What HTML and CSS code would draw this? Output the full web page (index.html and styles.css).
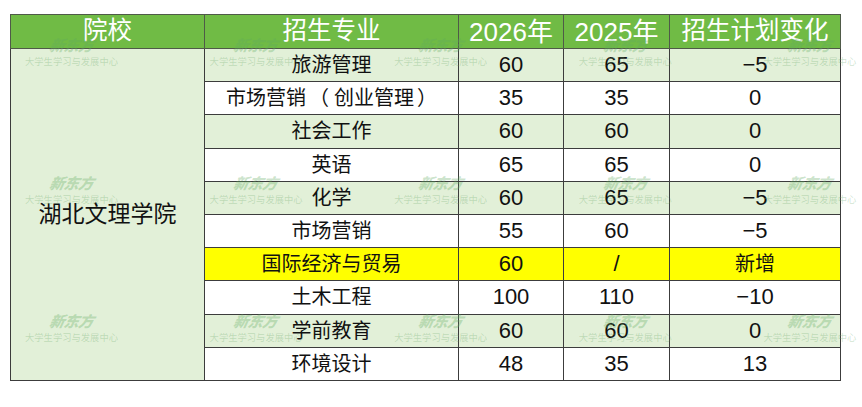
FILE: index.html
```html
<!DOCTYPE html>
<html lang="zh-CN">
<head>
<meta charset="utf-8">
<title>湖北文理学院 招生计划</title>
<link rel="stylesheet" href="styles.css">
</head>
<body>
<div class="page">
  <table class="plan">
    <colgroup>
      <col class="c1"><col class="c2"><col class="c3"><col class="c4"><col class="c5">
    </colgroup>
    <thead>
      <tr>
        <th>院校</th>
        <th>招生专业</th>
        <th class="yr">2026年</th>
        <th class="yr">2025年</th>
        <th>招生计划变化</th>
      </tr>
    </thead>
    <tbody>
      <tr class="g">
        <td class="school" rowspan="10">湖北文理学院</td>
        <td>旅游管理</td><td class="n">60</td><td class="n">65</td><td class="n">−5</td>
      </tr>
      <tr class="w"><td>市场营销<span class="lp">（</span>创业管理<span class="rp">）</span></td><td class="n">35</td><td class="n">35</td><td class="n">0</td></tr>
      <tr class="g"><td>社会工作</td><td class="n">60</td><td class="n">60</td><td class="n">0</td></tr>
      <tr class="w"><td>英语</td><td class="n">65</td><td class="n">65</td><td class="n">0</td></tr>
      <tr class="g"><td>化学</td><td class="n">60</td><td class="n">65</td><td class="n">−5</td></tr>
      <tr class="w"><td>市场营销</td><td class="n">55</td><td class="n">60</td><td class="n">−5</td></tr>
      <tr class="y"><td>国际经济与贸易</td><td class="n">60</td><td class="n">/</td><td>新增</td></tr>
      <tr class="w"><td>土木工程</td><td class="n">100</td><td class="n">110</td><td class="n">−10</td></tr>
      <tr class="g"><td>学前教育</td><td class="n">60</td><td class="n">60</td><td class="n">0</td></tr>
      <tr class="w"><td>环境设计</td><td class="n">48</td><td class="n">35</td><td class="n">13</td></tr>
    </tbody>
  </table>

  <div class="wm-layer" aria-hidden="true">
    <div class="wm"><span class="wm-logo">新东方</span><span class="wm-text">大学生学习与发展中心</span></div>
    <div class="wm"><span class="wm-logo">新东方</span><span class="wm-text">大学生学习与发展中心</span></div>
    <div class="wm"><span class="wm-logo">新东方</span><span class="wm-text">大学生学习与发展中心</span></div>
    <div class="wm"><span class="wm-logo">新东方</span><span class="wm-text">大学生学习与发展中心</span></div>
    <div class="wm"><span class="wm-logo">新东方</span><span class="wm-text">大学生学习与发展中心</span></div>
    <div class="wm"><span class="wm-logo">新东方</span><span class="wm-text">大学生学习与发展中心</span></div>
    <div class="wm"><span class="wm-logo">新东方</span><span class="wm-text">大学生学习与发展中心</span></div>
    <div class="wm"><span class="wm-logo">新东方</span><span class="wm-text">大学生学习与发展中心</span></div>
    <div class="wm"><span class="wm-logo">新东方</span><span class="wm-text">大学生学习与发展中心</span></div>
    <div class="wm"><span class="wm-logo">新东方</span><span class="wm-text">大学生学习与发展中心</span></div>
    <div class="wm"><span class="wm-logo">新东方</span><span class="wm-text">大学生学习与发展中心</span></div>
    <div class="wm"><span class="wm-logo">新东方</span><span class="wm-text">大学生学习与发展中心</span></div>
    <div class="wm"><span class="wm-logo">新东方</span><span class="wm-text">大学生学习与发展中心</span></div>
    <div class="wm"><span class="wm-logo">新东方</span><span class="wm-text">大学生学习与发展中心</span></div>
    <div class="wm"><span class="wm-logo">新东方</span><span class="wm-text">大学生学习与发展中心</span></div>
  </div>
</div>
</body>
</html>
```

FILE: styles.css
```css
html, body {
  margin: 0;
  padding: 0;
  background: #ffffff;
}

.page {
  position: relative;
  width: 862px;
  height: 407px;
  padding: 14px 0 0 10px;
  box-sizing: border-box;
  overflow: hidden;
  font-family: "Liberation Sans", "Noto Sans CJK SC", sans-serif;
  color: #111111;
}

.plan {
  border-collapse: collapse;
  table-layout: fixed;
  width: 830px;
}

.c1 { width: 194px; }
.c2 { width: 254px; }
.c3 { width: 105px; }
.c4 { width: 106px; }
.c5 { width: 171px; }

.plan th,
.plan td {
  border: 1px solid #3c3c3c;
  padding: 0;
  text-align: center;
  vertical-align: middle;
  line-height: 1;
  white-space: nowrap;
}

.plan thead th {
  height: 33px;
  background: #70bb45;
  color: #ffffff;
  font-weight: normal;
  font-size: 24.5px;
  border-color: #4f5a48;
}

.plan thead th.yr {
  font-size: 26px;
}

.plan tbody tr {
  height: 33.2px;
}

.plan tbody td {
  font-size: 20px;
}

.plan tbody td.n {
  font-size: 22px;
}

.plan tbody td.school {
  font-size: 23px;
  background: #e2f0d8;
}

.lp {
  margin-left: 3px;
  margin-right: 5px;
}

.rp {
  margin-left: 3px;
}

.g td { background: #e2f0d8; }
.w td { background: #ffffff; }
.y td { background: #ffff00; }

.wm-layer {
  position: absolute;
  top: 37px;
  left: 25px;
  display: grid;
  grid-template-columns: repeat(5, 93px);
  grid-template-rows: repeat(3, auto);
  column-gap: 91.6px;
  row-gap: 109px;
  pointer-events: none;
}

.wm {
  display: flex;
  flex-direction: column;
  align-items: center;
  gap: 4px;
}

.wm-logo {
  font-family: "Noto Sans CJK SC", sans-serif;
  font-size: 15px;
  line-height: 15px;
  font-weight: 900;
  font-style: italic;
  transform: skewX(-12deg);
  color: rgba(95, 170, 95, 0.32);
  letter-spacing: -0.5px;
}

.wm-text {
  font-family: "Noto Sans CJK SC", sans-serif;
  font-size: 9.3px;
  line-height: 10px;
  white-space: nowrap;
  color: rgba(110, 170, 110, 0.32);
}
```
